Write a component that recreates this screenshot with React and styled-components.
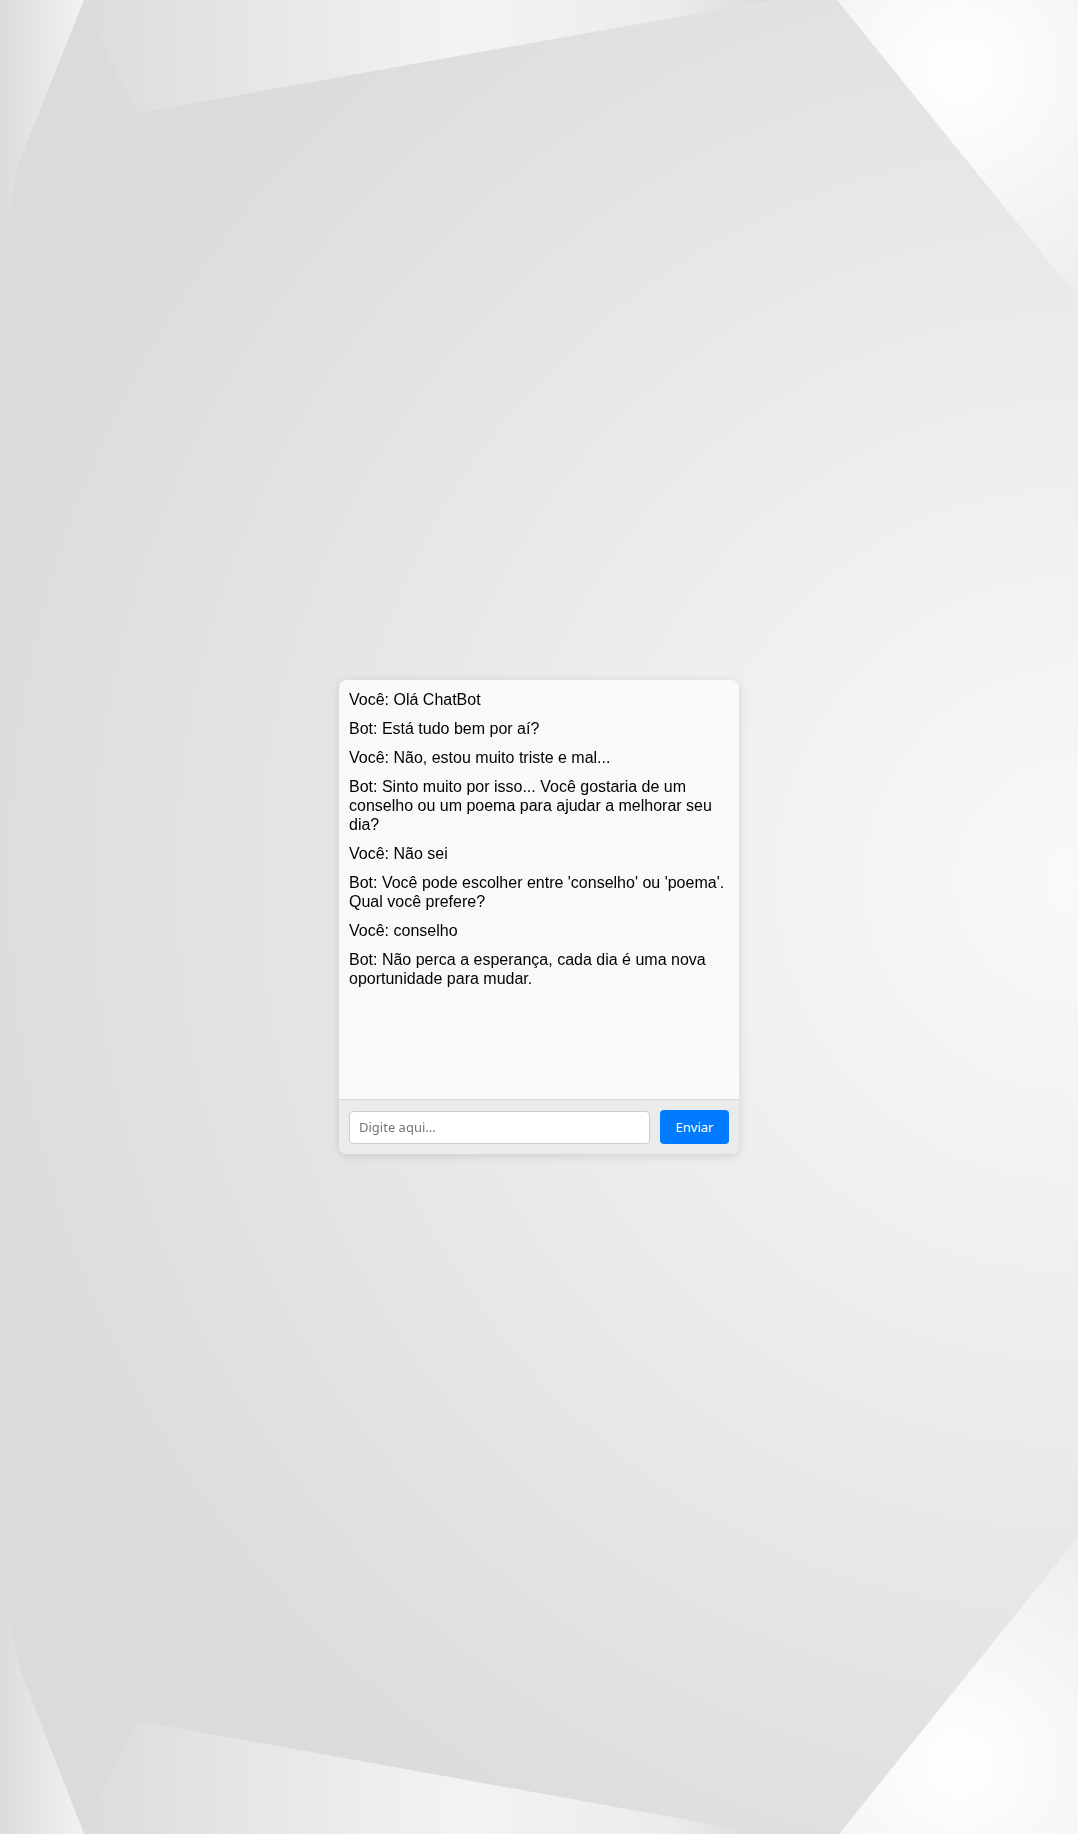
import styled, { createGlobalStyle } from "styled-components";

const GlobalStyle = createGlobalStyle`
  html, body {
    margin: 0;
    padding: 0;
  }
  body {
    background: #dddddd;
    font-family: "Liberation Sans", Arial, sans-serif;
  }
`;

const Page = styled.main`
  position: relative;
  min-height: 100vh;
  display: flex;
  align-items: center;
  justify-content: center;
`;

const Backdrop = styled.svg`
  position: fixed;
  inset: 0;
  width: 100%;
  height: 100%;
  z-index: 0;
`;

const ChatBox = styled.section`
  position: relative;
  z-index: 1;
  width: 400px;
  background: #f8f9fa;
  border-radius: 8px;
  overflow: hidden;
  box-shadow: 0 2px 10px rgba(0, 0, 0, 0.12);
`;

const Messages = styled.div`
  height: 420px;
  box-sizing: border-box;
  padding: 10px;
  overflow-y: auto;
  border-bottom: 1px solid #d6dbe1;
`;

const Message = styled.p`
  margin: 0 0 10px;
  font-size: 16px;
  line-height: 19px;
  color: #000;
`;

const InputRow = styled.form`
  display: flex;
  align-items: center;
  gap: 10px;
  padding: 10px;
  background: #ebebeb;
`;

const TextInput = styled.input`
  flex: 1;
  height: 33px;
  box-sizing: border-box;
  padding: 0 9px;
  border: 1px solid #cccccc;
  border-radius: 4px;
  background: #fff;
  font-family: "Noto Sans", "Open Sans", sans-serif;
  font-size: 13px;
  color: #333;
  outline: none;

  &::placeholder {
    color: #757575;
  }
`;

const SendButton = styled.button`
  width: 69px;
  height: 34px;
  border: none;
  border-radius: 4px;
  background: #007bff;
  color: #fff;
  font-family: "Noto Sans", "Open Sans", sans-serif;
  font-size: 13px;
  cursor: pointer;
`;

const messages = [
  "Você: Olá ChatBot",
  "Bot: Está tudo bem por aí?",
  "Você: Não, estou muito triste e mal...",
  "Bot: Sinto muito por isso... Você gostaria de um conselho ou um poema para ajudar a melhorar seu dia?",
  "Você: Não sei",
  "Bot: Você pode escolher entre 'conselho' ou 'poema'. Qual você prefere?",
  "Você: conselho",
  "Bot: Não perca a esperança, cada dia é uma nova oportunidade para mudar.",
];

function Background() {
  return (
    <Backdrop viewBox="0 0 1078 1834" preserveAspectRatio="none">
      <defs>
        <radialGradient id="base" cx="1078" cy="880" r="1150" gradientUnits="userSpaceOnUse">
          <stop offset="0" stopColor="#f9f9f9" />
          <stop offset="0.45" stopColor="#ececec" />
          <stop offset="1" stopColor="#dbdbdb" />
        </radialGradient>
        <linearGradient id="topBand" x1="84" y1="0" x2="773" y2="0" gradientUnits="userSpaceOnUse">
          <stop offset="0" stopColor="#dcdcdc" />
          <stop offset="0.55" stopColor="#f3f3f3" />
          <stop offset="0.85" stopColor="#ececec" />
          <stop offset="1" stopColor="#dadada" />
        </linearGradient>
        <linearGradient id="leftStrip" x1="0" y1="0" x2="84" y2="0" gradientUnits="userSpaceOnUse">
          <stop offset="0" stopColor="#dcdcdc" />
          <stop offset="1" stopColor="#f2f2f2" />
        </linearGradient>
        <radialGradient id="corner" cx="960" cy="70" r="260" gradientUnits="userSpaceOnUse">
          <stop offset="0" stopColor="#ffffff" />
          <stop offset="1" stopColor="#ededed" />
        </radialGradient>
        <radialGradient id="cornerB" cx="960" cy="1764" r="260" gradientUnits="userSpaceOnUse">
          <stop offset="0" stopColor="#ffffff" />
          <stop offset="1" stopColor="#ededed" />
        </radialGradient>
      </defs>
      <rect x="0" y="0" width="1078" height="1834" fill="url(#base)" />
      <polygon points="0,0 84,0 17,167 0,260" fill="url(#leftStrip)" />
      <polygon points="84,0 773,0 138,113 110,60" fill="url(#topBand)" />
      <polygon points="837,0 1078,0 1078,298" fill="url(#corner)" />
      <polygon points="0,1834 84,1834 19,1667 0,1574" fill="url(#leftStrip)" />
      <polygon points="84,1834 766,1834 138,1721 110,1774" fill="url(#topBand)" />
      <polygon points="839,1834 1078,1834 1078,1537" fill="url(#cornerB)" />
    </Backdrop>
  );
}

export default function App() {
  return (
    <>
      <GlobalStyle />
      <Page>
        <Background />
        <ChatBox>
          <Messages>
            {messages.map((m, i) => (
              <Message key={i}>{m}</Message>
            ))}
          </Messages>
          <InputRow onSubmit={(e) => e.preventDefault()}>
            <TextInput type="text" placeholder="Digite aqui..." />
            <SendButton type="submit">Enviar</SendButton>
          </InputRow>
        </ChatBox>
      </Page>
    </>
  );
}
